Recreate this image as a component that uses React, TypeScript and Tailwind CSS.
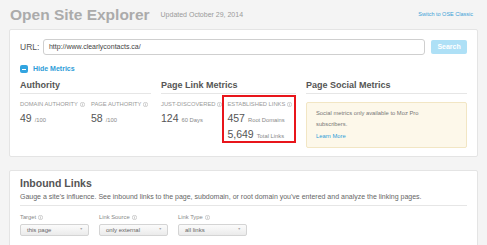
import React from "react";

const INFO = (
  <svg width="5" height="5" viewBox="0 0 10 10" className="inline-block shrink-0">
    <circle cx="5" cy="5" r="4.3" fill="none" stroke="#b0b0b0" strokeWidth="1.2" />
    <rect x="4.4" y="4" width="1.2" height="3.5" fill="#b0b0b0" />
    <rect x="4.4" y="2.2" width="1.2" height="1.2" fill="#b0b0b0" />
  </svg>
);

function Label({ text }: { text: string }) {
  return (
    <div className="flex items-center gap-[2px] whitespace-nowrap text-[5.8px] leading-[7px] uppercase text-[#9a9a9a]">
      {text} {INFO}
    </div>
  );
}

function Num({ n, unit }: { n: string; unit: string }) {
  return (
    <div className="flex items-baseline gap-[3px] whitespace-nowrap leading-[11px]">
      <span className="text-[10.5px] text-[#555]">{n}</span>
      <span className="text-[5.8px] text-[#888]">{unit}</span>
    </div>
  );
}

function Select({ label, value }: { label: string; value: string }) {
  return (
    <div className="flex flex-col gap-[3.5px]">
      <div className="flex items-center gap-[2px] text-[5.8px] leading-[7px] text-[#888]">
        {label} {INFO}
      </div>
      <div className="flex h-[12px] w-[69px] items-center justify-between rounded-[2px] border border-[#d4d4d4] bg-gradient-to-b from-[#fbfbfb] to-[#ebebeb] pl-[6px] pr-[5px] text-[6px] text-[#666]">
        <span>{value}</span>
        <span className="text-[3.5px] text-[#aaa]">▼</span>
      </div>
    </div>
  );
}

function Heading({ children }: { children: React.ReactNode }) {
  return (
    <h2 className="border-b border-[#e6e6e6] pb-[2px] text-[9px] font-bold leading-[11px] text-[#555]">{children}</h2>
  );
}

export default function App() {
  return (
    <div
      className="h-[245px] w-[487px] overflow-hidden bg-[#f4f4f4] px-[9px]"
      style={{ fontFamily: '"Liberation Sans", Arial, sans-serif' }}
    >
      <header className="flex h-[29px] items-center pl-[1px] pr-[5px]">
        <h1 className="text-[15.5px] font-bold text-[#ababab]">Open Site Explorer</h1>
        <span className="ml-[11px] mt-[2px] text-[7px] text-[#9a9a9a]">Updated October 29, 2014</span>
        <a className="ml-auto text-[5.5px] text-[#3b9fd6]">Switch to OSE Classic</a>
      </header>

      <section className="h-[128px] rounded-[2px] border border-[#e4e4e4] bg-white px-[10px] pt-[9px]">
        <div className="flex items-center">
          <span className="w-[23px] text-[8.5px] text-[#555]">URL:</span>
          <div className="flex h-[16px] w-[384px] items-center rounded-[3px] border border-[#cfcfcf] px-[5px] text-[7px] text-[#444]">
            http://www.clearlycontacts.ca/
          </div>
          <div className="ml-[6px] flex h-[14px] w-[36px] items-center justify-center rounded-[2px] bg-[#aee0f6] text-[7px] font-bold text-white">
            Search
          </div>
        </div>

        <div className="mt-[10px] flex h-[8px] items-center gap-[5px]">
          <span className="flex h-[8px] w-[8px] items-center justify-center rounded-[2px] bg-[#32a4e0]">
            <span className="h-[1px] w-[4px] bg-white" />
          </span>
          <span className="text-[7px] font-bold text-[#2e9dd8]">Hide Metrics</span>
        </div>

        <div className="mt-[7px] grid grid-cols-[131px_135px_1fr] gap-x-[10px]">
          <div>
            <Heading>Authority</Heading>
            <div className="mt-[7px] flex">
              <div className="flex w-[71px] flex-col gap-[5px]">
                <Label text="Domain Authority" />
                <Num n="49" unit="/100" />
              </div>
              <div className="flex flex-col gap-[5px]">
                <Label text="Page Authority" />
                <Num n="58" unit="/100" />
              </div>
            </div>
          </div>

          <div>
            <Heading>Page Link Metrics</Heading>
            <div className="mt-[1px] flex">
              <div className="flex w-[63px] flex-col gap-[5px] pt-[6px]">
                <Label text="Just-Discovered" />
                <Num n="124" unit="60 Days" />
              </div>
              <div className="flex h-[48px] w-[77px] flex-col border-2 border-[#e8151b] pl-[3px] pt-[4px]">
                <Label text="Established Links" />
                <div className="mt-[5px] flex flex-col gap-[3px]">
                  <Num n="457" unit="Root Domains" />
                  <Num n="5,649" unit="Total Links" />
                </div>
              </div>
            </div>
          </div>

          <div>
            <Heading>Page Social Metrics</Heading>
            <div className="mt-[8px] h-[46px] rounded-[2px] border border-[#f2e6c4] bg-[#fdf8ea] pl-[9px] pt-[4.5px] text-[5.8px] leading-[11.5px] text-[#777]">
              Social metrics only available to Moz Pro
              <br />
              subscribers.
              <br />
              <span className="text-[#2e9dd8]">Learn More</span>
            </div>
          </div>
        </div>
      </section>

      <section className="mt-[13px] h-[90px] rounded-[2px] border border-[#e4e4e4] bg-white px-[10px] pt-[5.5px]">
        <h2 className="text-[10.5px] font-bold leading-[13px] text-[#555]">Inbound Links</h2>
        <p className="mt-[2px] border-b border-[#e6e6e6] pb-[4.5px] text-[7px] leading-[9px] text-[#666]">
          Gauge a site's influence. See inbound links to the page, subdomain, or root domain you've entered and analyze the linking pages.
        </p>
        <div className="mt-[7.5px] flex gap-[10px]">
          <Select label="Target" value="this page" />
          <Select label="Link Source" value="only external" />
          <Select label="Link Type" value="all links" />
        </div>
      </section>
    </div>
  );
}
